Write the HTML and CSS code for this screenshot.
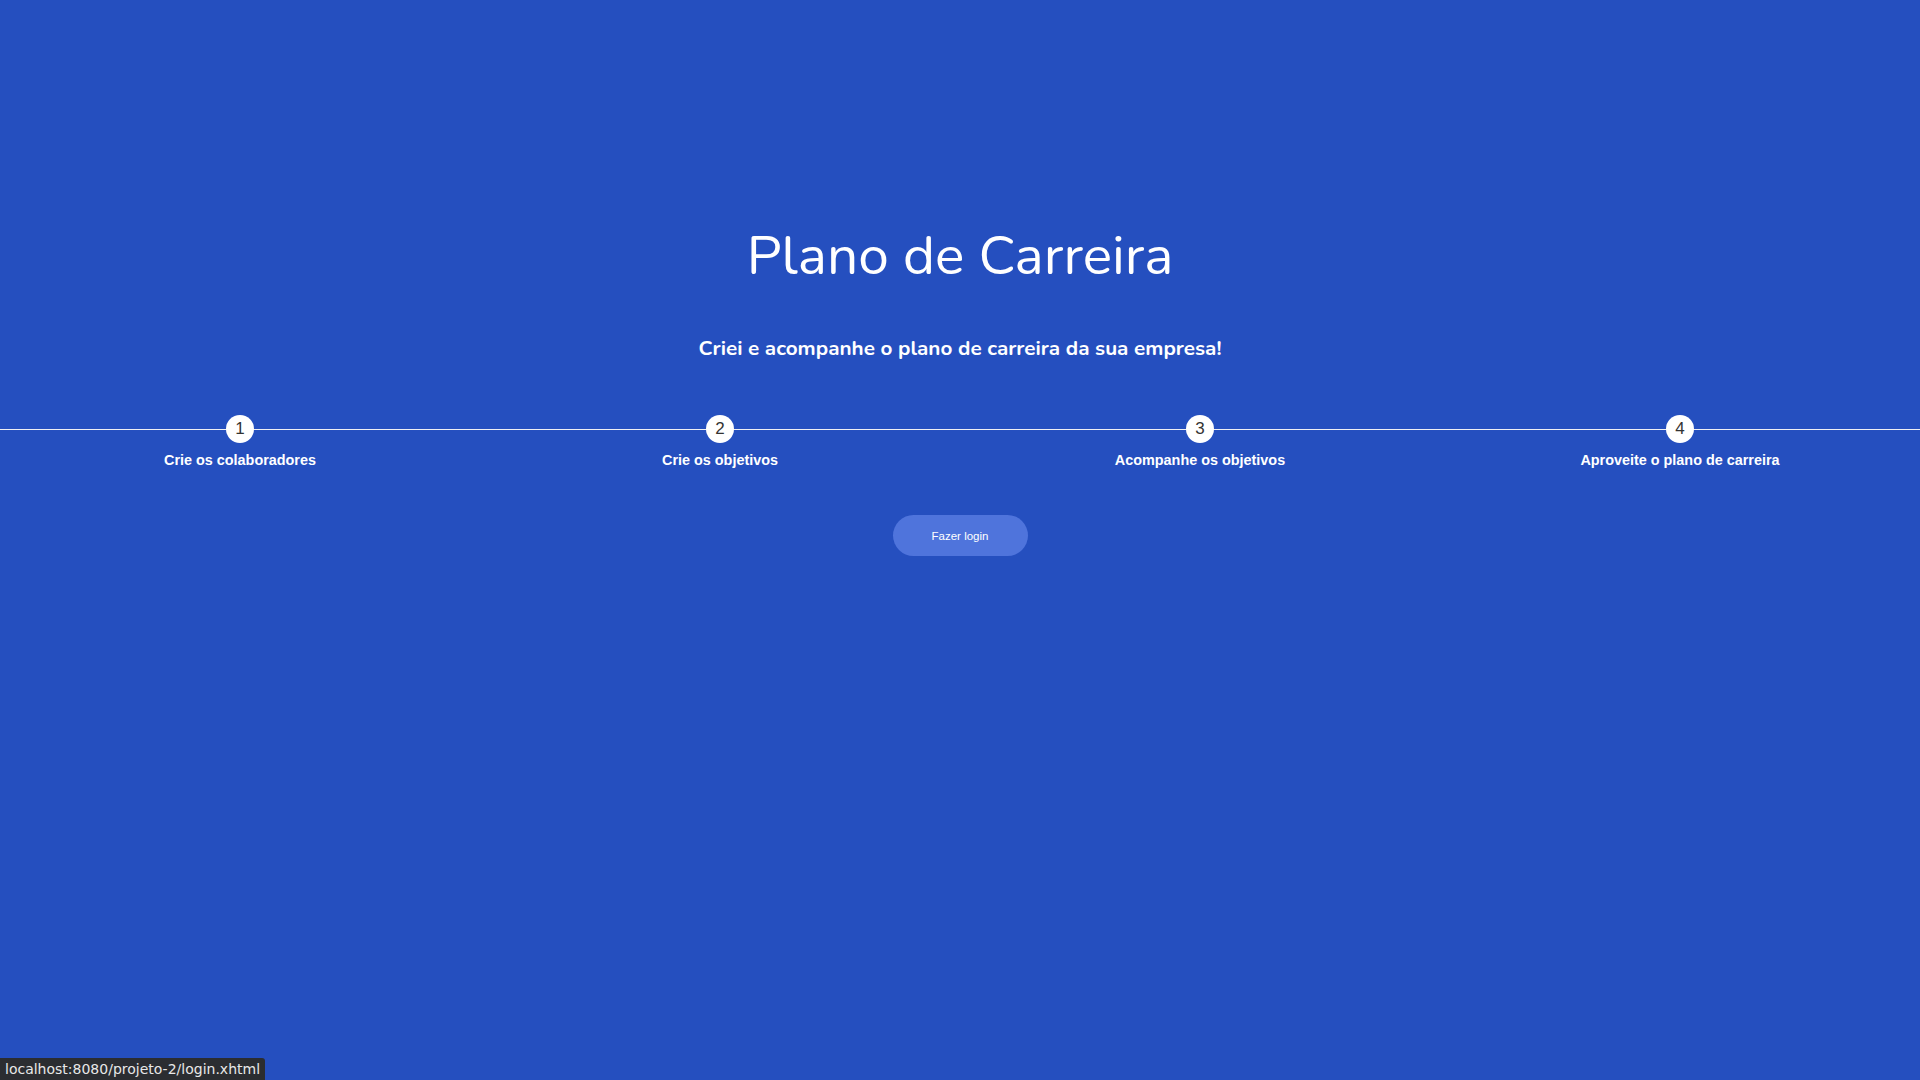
FILE: index.html
```html
<!DOCTYPE html>
<html lang="pt">
<head>
<meta charset="utf-8">
<title>Plano de Carreira</title>
<link rel="stylesheet" href="styles.css">
</head>
<body>
<main class="hero">
  <h1 class="title">Plano de Carreira</h1>
  <h2 class="subtitle">Criei e acompanhe o plano de carreira da sua empresa!</h2>
  <ol class="steps">
    <li class="step"><span class="dot">1</span><span class="label">Crie os colaboradores</span></li>
    <li class="step"><span class="dot">2</span><span class="label">Crie os objetivos</span></li>
    <li class="step"><span class="dot">3</span><span class="label">Acompanhe os objetivos</span></li>
    <li class="step"><span class="dot">4</span><span class="label">Aproveite o plano de carreira</span></li>
  </ol>
  <a class="login" href="#">Fazer login</a>
</main>
<div class="status">localhost:8080/projeto-2/login.xhtml</div>
</body>
</html>
```
FILE: styles.css
```css
html, body {
  margin: 0;
  padding: 0;
  height: 100%;
}
body {
  background: #254fbf;
  color: #fff;
  font-family: "Liberation Sans", Arial, sans-serif;
}
.hero {
  display: flex;
  flex-direction: column;
  align-items: center;
  padding-top: 218px;
}
.title {
  margin: 0;
  font-family: "Nunito", "Lato", "Open Sans", sans-serif;
  font-weight: 400;
  font-size: 55px;
  line-height: 76px;
}
.subtitle {
  margin: 40px 0 0;
  font-family: "Nunito", "Lato", "Open Sans", sans-serif;
  font-weight: 700;
  font-size: 20.7px;
  line-height: 28px;
}
.steps {
  list-style: none;
  margin: 53px 0 0;
  padding: 0;
  width: 100%;
  display: grid;
  grid-template-columns: repeat(4, 1fr);
  position: relative;
}
.steps::before {
  content: "";
  position: absolute;
  left: 0;
  right: 0;
  top: 14px;
  height: 1px;
  background: #f0f0f4;
}
.step {
  display: flex;
  flex-direction: column;
  align-items: center;
  position: relative;
}
.dot {
  width: 28px;
  height: 28px;
  border-radius: 50%;
  background: #fff;
  color: #333;
  font-size: 17px;
  line-height: 28px;
  text-align: center;
}
.label {
  margin-top: 7px;
  font-weight: 700;
  font-size: 14.4px;
  line-height: 20px;
}
.login {
  margin-top: 45px;
  width: 135px;
  height: 41px;
  border-radius: 21px;
  background: #4f74dc;
  color: #fff;
  text-decoration: none;
  font-size: 11.5px;
  display: flex;
  align-items: center;
  justify-content: center;
}
.status {
  position: fixed;
  left: 0;
  bottom: 0;
  height: 22px;
  padding: 0 5px;
  background: #2b2d31;
  color: #e8e8e8;
  border-top-right-radius: 3px;
  font-family: "DejaVu Sans", "Noto Sans", sans-serif;
  font-size: 14px;
  line-height: 22px;
}
```
